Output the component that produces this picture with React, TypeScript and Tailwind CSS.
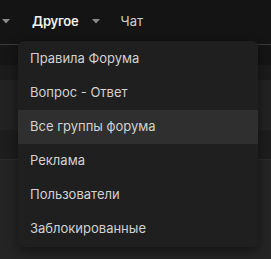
import React from "react";

const Caret = ({ className = "" }: { className?: string }) => (
  <svg width="8" height="5" viewBox="0 0 8 5" className={className}>
    <path d="M0 0 L8 0 L4 4.5 Z" fill="#8a8a8a" />
  </svg>
);

const items = [
  "Правила Форума",
  "Вопрос - Ответ",
  "Все группы форума",
  "Реклама",
  "Пользователи",
  "Заблокированные",
];

export default function App() {
  return (
    <div
      className="relative w-[271px] h-[259px] overflow-hidden bg-[#242424]"
      style={{ fontFamily: "Inter, 'Noto Sans', sans-serif" }}
    >
      <div className="h-[44px] bg-[#141414] flex items-center">
        <Caret className="ml-[2px] mt-[-2px]" />
        <span className="ml-[22px] text-[13px] font-semibold text-[#f0f0f0] tracking-[-0.2px]">Другое</span>
        <Caret className="ml-[13px] mt-[-2px]" />
        <span className="ml-[21px] text-[13px] text-[#cfcfcf]">Чат</span>
      </div>
      <div className="h-px bg-[#3a3a3a]" />
      <div className="h-[20px] bg-[#151515]" />
      <div className="h-[15px] bg-[#1b1b1b]" />
      <div className="h-[50px] bg-[#222222]" />
      <div className="h-[29px] bg-[#1d1d1d]" />
      <div className="h-px bg-[#2c2c2c]" />

      <div className="absolute left-[18px] top-[41px] w-[240px] rounded-md bg-[#1f1f1f] py-px shadow-[0_4px_12px_rgba(0,0,0,0.45)]">
        {items.map((t, i) => (
          <div
            key={t}
            className={
              "h-[34px] flex items-center pl-3 text-[13px] text-[#d2d2d2] " +
              (i === 2 ? "bg-[#2f2f2f]" : "")
            }
          >
            {t}
          </div>
        ))}
      </div>
    </div>
  );
}
